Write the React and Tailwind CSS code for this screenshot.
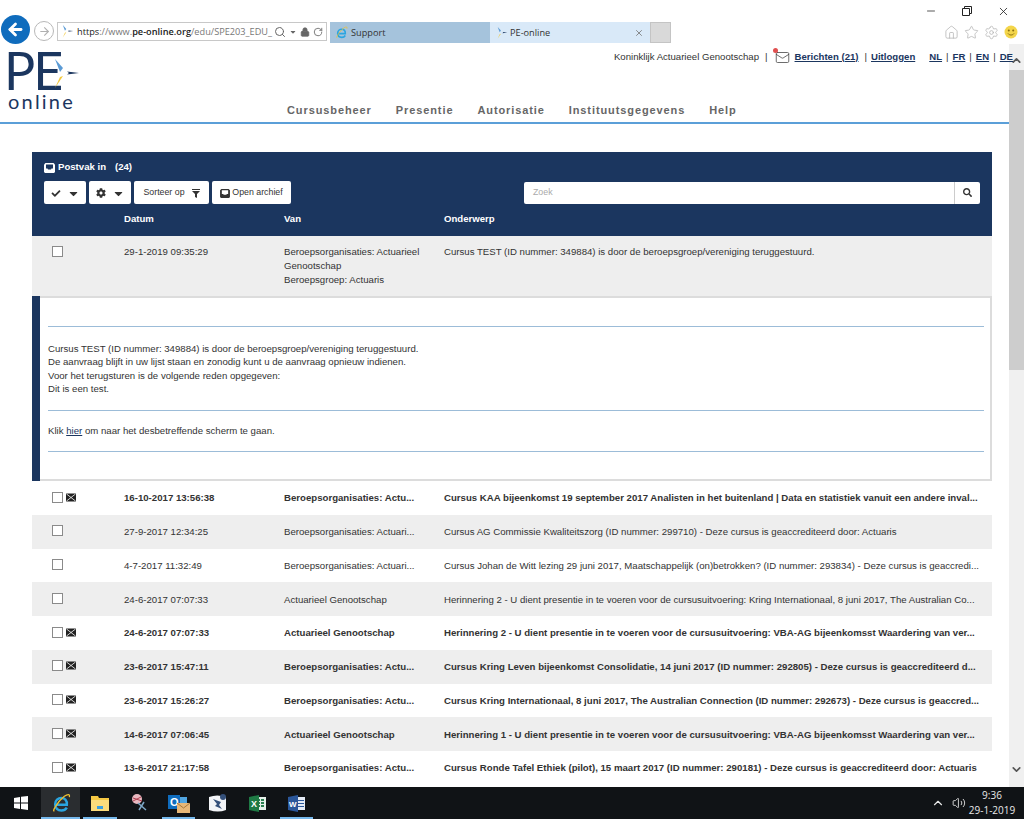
import { FaCaretDown, FaCheck, FaCog, FaSearch } from 'react-icons/fa';
import { ChevronDown, ChevronUp, Home, Minus, RotateCw, Search, Settings, Star, Volume2, X, Lock, ArrowLeft, ArrowRight, Mail } from 'lucide-react';

const rows = [
  { date: '16-10-2017 13:56:38', from: 'Beroepsorganisaties: Actu...', subject: 'Cursus KAA bijeenkomst 19 september 2017 Analisten in het buitenland | Data en statistiek vanuit een andere inval...', unread: true },
  { date: '27-9-2017 12:34:25', from: 'Beroepsorganisaties: Actuari...', subject: 'Cursus AG Commissie Kwaliteitszorg (ID nummer: 299710) - Deze cursus is geaccrediteerd door: Actuaris' },
  { date: '4-7-2017 11:32:49', from: 'Beroepsorganisaties: Actuari...', subject: 'Cursus Johan de Witt lezing 29 juni 2017, Maatschappelijk (on)betrokken? (ID nummer: 293834) - Deze cursus is geaccredi...' },
  { date: '24-6-2017 07:07:33', from: 'Actuarieel Genootschap', subject: 'Herinnering 2 - U dient presentie in te voeren voor de cursusuitvoering: Kring Internationaal, 8 juni 2017, The Australian Co...' },
  { date: '24-6-2017 07:07:33', from: 'Actuarieel Genootschap', subject: 'Herinnering 2 - U dient presentie in te voeren voor de cursusuitvoering: VBA-AG bijeenkomsst Waardering van ver...', unread: true },
  { date: '23-6-2017 15:47:11', from: 'Beroepsorganisaties: Actu...', subject: 'Cursus Kring Leven bijeenkomst Consolidatie, 14 juni 2017 (ID nummer: 292805) - Deze cursus is geaccrediteerd d...', unread: true },
  { date: '23-6-2017 15:26:27', from: 'Beroepsorganisaties: Actu...', subject: 'Cursus Kring Internationaal, 8 juni 2017, The Australian Connection (ID nummer: 292673) - Deze cursus is geaccred...', unread: true },
  { date: '14-6-2017 07:06:45', from: 'Actuarieel Genootschap', subject: 'Herinnering 1 - U dient presentie in te voeren voor de cursusuitvoering: VBA-AG bijeenkomsst Waardering van ver...', unread: true },
  { date: '13-6-2017 21:17:58', from: 'Beroepsorganisaties: Actu...', subject: 'Cursus Ronde Tafel Ethiek (pilot), 15 maart 2017 (ID nummer: 290181) - Deze cursus is geaccrediteerd door: Actuaris', unread: true },
];

const navItems = ['Cursusbeheer', 'Presentie', 'Autorisatie', 'Instituutsgegevens', 'Help'];

const LogoStar = ({ className }) => (
  <svg className={className} viewBox="0 0 26 30">
    <path d="M1 0 L9 9 L6 13 Z" fill="#5b9bd5" />
    <path d="M13 12.5 L25 14 L13 15.5 L15 14 Z" fill="#1b365f" />
    <path d="M9 17 L6 18 L1 29 Z" fill="#f3c93c" />
  </svg>
);

const IeIcon = ({ size = 18 }) => (
  <svg width={size} height={size} viewBox="0 0 24 24" fill="none">
    <path d="M6 14h13c.5-5-2.500-8-6.500-8S5 9 5 13.500 8 21 12.500 21c3 0 5-1 6.500-3.500" stroke="#2aa5e0" strokeWidth="3" />
    <path d="M4 21C1 24 6 12 16 4c4-3 7-3 6 1" stroke="#f0c030" strokeWidth="1.500" />
  </svg>
);

const InboxIcon = ({ className }) => (
  <svg className={className} viewBox="0 0 11 10">
    <path d="M1.500 0h8L11 1.500V9l-1 1H1L0 9V1.500z" fill="currentColor" />
    <path d="M2 1.500h7v4H7.500L7 6.500H4l-.500-1H2z" fill="var(--tray)" />
  </svg>
);

const MailIcon = () => (
  <svg className="w-[10px] h-[9px] shrink-0" viewBox="0 0 10 9">
    <path d="M0 .5h10v8H0z" fill="#222" />
    <path d="M.5 1l9 7M9.500 1l-9 7" stroke="#fff" strokeWidth=".8" />
  </svg>
);

const Divider = () => <span className="mx-[4px] text-[#333]">|</span>;

const NavLink = ({ children }) => <a className="font-bold text-[#1b365f] underline">{children}</a>;

const Check = () => <span className="block w-[11px] h-[11px] border border-[#8a8a8a] bg-white" />;

const ToolButton = ({ className, children }) => (
  <button className={`h-[23px] pt-[1px] bg-white rounded-[2px] flex items-center justify-center text-[#333] ${className}`}>{children}</button>
);

const TaskIcon = ({ active, tile, children }) => (
  <div className={`w-[39.300px] h-full flex items-center justify-center relative ${tile ? 'bg-[#2a2d30]' : ''}`}>
    {children}
    {active && <span className={`absolute bottom-0 h-[2px] bg-[#76b9ed] ${tile ? 'left-0 right-0' : 'left-[3px] right-[3px]'}`} />}
  </div>
);

const MessageRow = ({ row, shaded }) => (
  <div className={`h-[33.750px] pt-[1.500px] grid grid-cols-[92px_160px_160px_1fr] items-center text-[9.650px] whitespace-nowrap text-[#333] ${shaded ? 'bg-[#eeeeee]' : 'bg-white'} ${row.unread ? 'font-bold text-[#222]' : ''}`}>
    <div className="flex items-center gap-[3px] pl-[20px] -mt-[3px]">
      <Check />
      {row.unread && <MailIcon />}
    </div>
    <div>{row.date}</div>
    <div>{row.from}</div>
    <div>{row.subject}</div>
  </div>
);

export default function App() {
  return (
    <div className="h-[819px] w-[1024px] overflow-hidden flex flex-col bg-white font-['Liberation_Sans',Arial,sans-serif]">
      {/* browser chrome */}
      <div className="h-[44px] shrink-0 flex items-end">
        <div className="flex items-end h-[28px] pl-[1px]">
          <div className="w-[29px] h-[29px] rounded-full bg-[#0f6cbd] flex items-center justify-center">
            <ArrowLeft className="w-[19px] h-[19px] text-white" strokeWidth={3.500} />
          </div>
          <div className="w-[20px] h-[20px] ml-[4px] mb-[3px] rounded-full border border-[#b8b8b8] flex items-center justify-center">
            <ArrowRight className="w-[13px] h-[13px] text-[#b0b0b0]" />
          </div>
          <div className="w-[270px] h-[19px] ml-[3px] mb-[3px] border border-[#c8c8c8] flex items-center pl-[3px] pr-[3px] font-['Open_Sans',sans-serif] text-[9.200px] whitespace-nowrap">
            <LogoStar className="w-[14px] h-[13px] shrink-0" />
            <span className="ml-[2px] text-[#222]">https</span>
            <span className="text-[#777]">://www.</span>
            <span className="text-[#222] font-semibold">pe-online.org</span>
            <span className="text-[#777]">/edu/SPE203_EDU_</span>
            <span className="ml-auto flex items-center gap-[3px] text-[#666]">
              <Search className="w-[12px] h-[12px]" />
              <FaCaretDown className="w-[8px] h-[8px]" />
              <Lock className="w-[10px] h-[10px]" fill="#666" />
              <RotateCw className="w-[10px] h-[10px]" />
            </span>
          </div>
        </div>
        <div className="flex h-[21px] mb-[1px] ml-[3px] font-['Open_Sans',sans-serif] text-[9.200px] text-[#333]">
          <div className="w-[160px] bg-[#a5c3dc] flex items-center gap-[3px] pl-[5px]">
            <IeIcon size={13} />
            <span>Support</span>
          </div>
          <div className="w-[160px] bg-[#d9e9f8] flex items-center pl-[6px] pr-[6px]">
            <LogoStar className="w-[13px] h-[12px]" />
            <span className="ml-[1px]">PE-online</span>
            <X className="ml-auto w-[10px] h-[10px] text-[#777]" />
          </div>
          <div className="w-[21px] bg-[#d9d9d9] border border-[#c4c4c4]" />
        </div>
        <div className="ml-auto h-full flex flex-col items-end pr-[6px]">
          <div className="flex items-center gap-[25px] h-[22px] pr-[8px] text-[#222]">
            <Minus className="w-[12px] h-[12px]" strokeWidth={1.500} />
            <svg className="w-[10px] h-[10px]" viewBox="0 0 10 10" fill="none" stroke="#222">
              <path d="M.5 2.500h7v7h-7zM2.500 2.500v-2h7v7h-2" />
            </svg>
            <X className="w-[13px] h-[13px]" strokeWidth={1.500} />
          </div>
          <div className="flex items-center gap-[5px] h-[20px] text-[#b5b5b5]">
            <Home className="w-[15px] h-[15px]" strokeWidth={1.250} />
            <Star className="w-[15px] h-[15px]" strokeWidth={1.250} />
            <Settings className="w-[15px] h-[15px]" strokeWidth={1.250} />
            <svg className="w-[14px] h-[14px]" viewBox="0 0 14 14">
              <circle cx="7" cy="7" r="6.500" fill="#f3d54a" />
              <circle cx="4.800" cy="5.500" r="1" fill="#8a6d10" />
              <circle cx="9.200" cy="5.500" r="1" fill="#8a6d10" />
              <path d="M4 8.500c1.500 2 4.500 2 6 0" stroke="#8a6d10" fill="none" />
            </svg>
          </div>
        </div>
      </div>

      <div className="flex-1 min-h-0 flex">
        <div className="flex-1 min-w-0 flex flex-col">
          {/* site header */}
          <div className="h-[80px] shrink-0 flex border-b-2 border-[#5b9fd8]">
            <div className="w-[287px] shrink-0 pl-[4px] pt-[5px] text-[#1b365f]">
              <div className="flex items-start h-[42px]">
                <span className="font-['Lato',sans-serif] text-[52px] leading-[42px] tracking-[-2px]">PE</span>
                <LogoStar className="w-[26px] h-[30px] -ml-[7px] mt-[10px]" />
              </div>
              <div className="pl-[4px] text-[20px] leading-[20px] tracking-[2.200px] font-['Lato',sans-serif]">online</div>
            </div>
            <div className="flex-1 min-w-0 flex flex-col">
              <div className="relative z-10 flex justify-end items-center h-[26px] -mr-[4px] text-[9.600px] text-[#333] whitespace-nowrap">
                <span>Koninklijk Actuarieel Genootschap</span>
                <span className="mx-[6px]">|</span>
                <span className="relative mr-[4px]">
                  <Mail className="w-[17px] h-[15px] text-[#444]" strokeWidth={1.250} />
                  <span className="absolute -left-[1px] -top-[2px] w-[5px] h-[5px] rounded-full bg-[#e05050]" />
                </span>
                <NavLink>Berichten (21)</NavLink>
                <span className="ml-[6px] mr-[4px]">|</span>
                <NavLink>Uitloggen</NavLink>
                <span className="w-[14px]" />
                <NavLink>NL</NavLink>
                <Divider />
                <NavLink>FR</NavLink>
                <Divider />
                <NavLink>EN</NavLink>
                <Divider />
                <NavLink>DE</NavLink>
              </div>
              <div className="flex gap-[24px] mt-[32px] text-[11px] font-bold tracking-[0.900px] text-[#666]">
                {navItems.map((item) => (
                  <span key={item}>{item}</span>
                ))}
              </div>
            </div>
          </div>

          {/* inbox panel */}
          <div className="ml-[32px] mr-[17px] mt-[28px]">
            <div className="h-[84px] bg-[#1b365f] text-white px-[12px] pt-[9px]">
              <div className="flex items-center gap-[2px] text-[9.600px] font-bold h-[13px]">
                <InboxIcon className="w-[11px] h-[10px] mr-[1px] [--tray:#1b365f]" />
                <span>Postvak in</span>
                <span className="ml-[7px]">(24)</span>
              </div>
              <div className="flex items-center mt-[7px]">
                <ToolButton className="w-[42px] gap-[6px]">
                  <FaCheck className="w-[10px] h-[9px]" />
                  <FaCaretDown className="w-[13px] h-[13px]" />
                </ToolButton>
                <ToolButton className="w-[42px] gap-[6px] ml-[3px]">
                  <FaCog className="w-[10px] h-[10px]" />
                  <FaCaretDown className="w-[13px] h-[13px]" />
                </ToolButton>
                <ToolButton className="w-[75px] gap-[7px] ml-[3px] text-[8.800px]">
                  <span>Sorteer op</span>
                  <svg className="w-[8px] h-[9px]" viewBox="0 0 8 9" fill="#333">
                    <path d="M0 0h8v1H0zM0 2h8L5 5v4L3 8V5z" />
                  </svg>
                </ToolButton>
                <ToolButton className="w-[79px] gap-[2px] ml-[3px] text-[8.800px]">
                  <InboxIcon className="w-[10px] h-[9px] [--tray:#ffffff]" />
                  <span>Open archief</span>
                </ToolButton>
                <div className="ml-[233px] w-[456px] h-[22px] bg-white rounded-[2px] flex">
                  <div className="flex-1 pl-[9px] pt-[1px] flex items-center text-[8.800px] text-[#aaa]">Zoek</div>
                  <div className="w-[26px] border-l border-[#ccc] flex items-center justify-center text-[#333]">
                    <FaSearch className="w-[9px] h-[9px]" />
                  </div>
                </div>
              </div>
              <div className="mt-[8px] grid grid-cols-[160px_160px_1fr] text-[9.600px] font-bold leading-[13px] pl-[80px]">
                <span>Datum</span>
                <span>Van</span>
                <span>Onderwerp</span>
              </div>
            </div>

            <div className="h-[60px] bg-[#eeeeee] grid grid-cols-[92px_160px_160px_1fr] text-[9.650px] leading-[14px] text-[#333] pt-[9px]">
              <div className="pl-[20px] pt-[1px]"><Check /></div>
              <div>29-1-2019 09:35:29</div>
              <div>
                Beroepsorganisaties: Actuarieel
                <br />
                Genootschap
                <br />
                Beroepsgroep: Actuaris
              </div>
              <div>Cursus TEST (ID nummer: 349884) is door de beroepsgroep/vereniging teruggestuurd.</div>
            </div>

            {/* opened message */}
            <div className="h-[185px] flex border-t-2 border-[#dcdcdc] border-b-2 border-r-2 bg-white">
              <div className="w-[8px] -mt-[2px] -mb-[2px] bg-[#1b365f] shrink-0" />
              <div className="flex-1 pl-[8px] pr-[6px] pt-[28px] text-[9.650px] leading-[13.400px] text-[#333]">
                <div className="h-px bg-[#9cbcd8]" />
                <div className="mt-[15px]">
                  Cursus TEST (ID nummer: 349884) is door de beroepsgroep/vereniging teruggestuurd.
                  <br />
                  De aanvraag blijft in uw lijst staan en zonodig kunt u de aanvraag opnieuw indienen.
                  <br />
                  Voor het terugsturen is de volgende reden opgegeven:
                  <br />
                  Dit is een test.
                </div>
                <div className="h-px bg-[#9cbcd8] mt-[14px]" />
                <div className="mt-[13px]">
                  Klik <a className="text-[#1b365f] underline">hier</a> om naar het desbetreffende scherm te gaan.
                </div>
                <div className="h-px bg-[#9cbcd8] mt-[14px]" />
              </div>
            </div>

            {rows.map((row, i) => (
              <MessageRow key={i} row={row} shaded={i % 2 === 1} />
            ))}
          </div>
        </div>

        {/* scrollbar */}
        <div className="w-[15px] shrink-0 bg-[#f0f0f0] flex flex-col items-center">
          <ChevronUp className="w-[13px] h-[13px] text-[#555] mt-[10px] shrink-0" strokeWidth={3} />
          <div className="w-full h-[300px] bg-[#cdcdcd] mt-[3px] shrink-0" />
          <ChevronDown className="w-[13px] h-[13px] text-[#555] mt-auto mb-[11px] shrink-0" strokeWidth={3} />
        </div>
      </div>

      {/* taskbar */}
      <div className="h-[32px] shrink-0 bg-[#101316] flex items-center text-white">
        <div className="w-[41px] h-full flex items-center justify-center">
          <svg className="w-[14px] h-[14px]" viewBox="0 0 14 14" fill="#fff">
            <path d="M0 2l6-1v5.500H0zM7 .8L14 0v6.500H7zM0 7.500h6V13l-6-1zM7 7.500h7V14l-7-1z" />
          </svg>
        </div>
        <TaskIcon active tile>
          <IeIcon size={20} />
        </TaskIcon>
        <TaskIcon active>
          <svg className="w-[18px] h-[16px]" viewBox="0 0 18 16">
            <path d="M0 1h7l1 2h10v13H0z" fill="#f6c944" />
            <path d="M0 5h18v11H0z" fill="#fbdc7c" />
            <path d="M6 11h6v3H6z" fill="#3aa0e0" />
          </svg>
        </TaskIcon>
        <TaskIcon>
          <svg className="w-[19px] h-[18px]" viewBox="0 0 19 18" fill="none">
            <circle cx="7" cy="5" r="5" fill="#e8b8c0" />
            <path d="M3 4l9 3M3 7l8-4" stroke="#b04050" />
            <path d="M8 9l8 7M14 8l-5 8" stroke="#7fa8c8" strokeWidth="1.500" />
          </svg>
        </TaskIcon>
        <TaskIcon active>
          <svg className="w-[22px] h-[20px]" viewBox="0 0 22 20">
            <path d="M0 2h12v14H0z" fill="#0f6cbd" />
            <text x="2" y="13" fontSize="11" fontWeight="700" fill="#fff">O</text>
            <path d="M12 4h7v6h-7z" fill="#50a5e0" />
            <path d="M9 10h13v10H9z" fill="#e8b878" />
            <path d="M9 10l6.500 5 6.500-5" stroke="#a87838" fill="none" />
          </svg>
        </TaskIcon>
        <TaskIcon>
          <svg className="w-[19px] h-[19px]" viewBox="0 0 19 19">
            <path d="M1 3q8-3 17 0v13q-8 3-17 0z" fill="#f2f4f7" />
            <path d="M5 5l8 3-2 3 3 4-7-3 2-2z" fill="#34507a" />
            <circle cx="15" cy="3" r="3" fill="#34507a" />
          </svg>
        </TaskIcon>
        <TaskIcon>
          <svg className="w-[17px] h-[17px]" viewBox="0 0 17 17">
            <path d="M6 2h11v13H6z" fill="#e6f0ea" />
            <path d="M8 4h3v2H8zM12 4h3v2h-3zM8 7h3v2H8zM12 7h3v2h-3zM8 10h3v2H8zM12 10h3v2h-3z" fill="#2a8050" />
            <path d="M0 2l10-2v17l-10-2z" fill="#1f7a45" />
            <text x="2" y="12" fontSize="9" fontWeight="700" fill="#fff">X</text>
          </svg>
        </TaskIcon>
        <TaskIcon active>
          <svg className="w-[17px] h-[17px]" viewBox="0 0 17 17">
            <path d="M6 2h11v13H6z" fill="#e4ebf6" />
            <path d="M10 5h6v1h-6zM10 8h6v1h-6zM10 11h6v1h-6z" fill="#2b579a" />
            <path d="M0 2l10-2v17l-10-2z" fill="#2b579a" />
            <text x="1" y="12" fontSize="8" fontWeight="700" fill="#fff">W</text>
          </svg>
        </TaskIcon>
        <div className="ml-auto flex items-center pr-[8px] text-[#e8e8e8]">
          <ChevronUp className="w-[14px] h-[14px]" />
          <Volume2 className="w-[14px] h-[14px] ml-[7px]" strokeWidth={1.500} />
          <div className="ml-[2px] w-[48px] text-center font-['Open_Sans',sans-serif] text-[10px] leading-[15px]">
            <div>9:36</div>
            <div>29-1-2019</div>
          </div>
        </div>
      </div>
    </div>
  );
}
